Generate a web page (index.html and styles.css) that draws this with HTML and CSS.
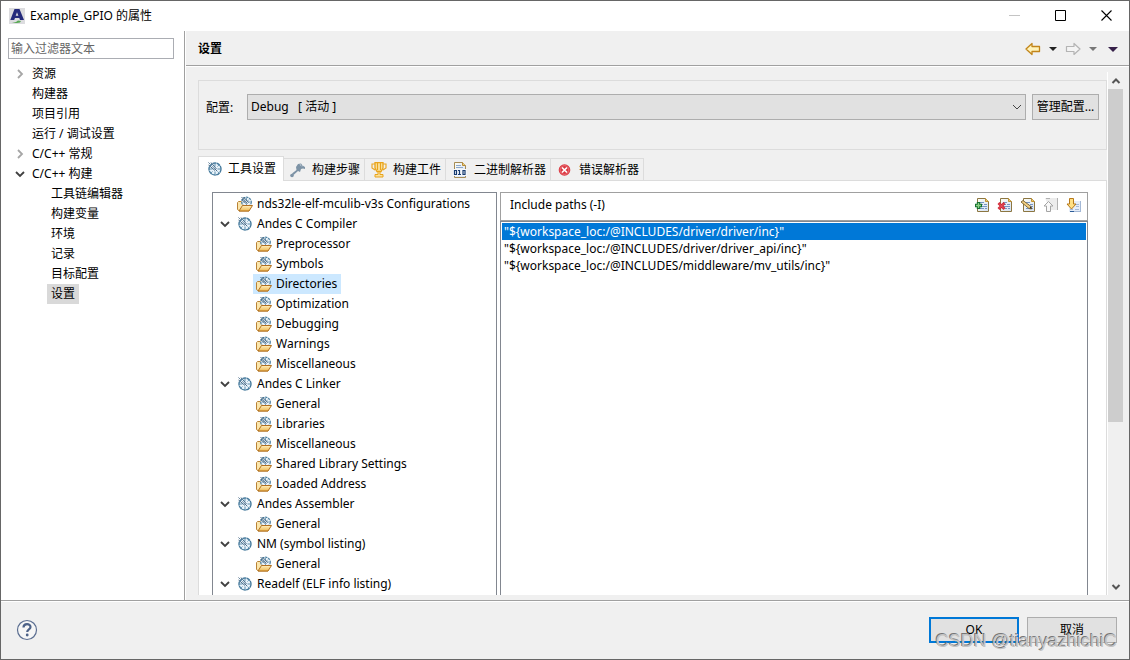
FILE: index.html
```html
<!DOCTYPE html>
<html lang="zh-CN">
<head>
<meta charset="utf-8">
<title>Example_GPIO 的属性</title>
<link rel="stylesheet" href="styles.css">
</head>
<body>
<svg class="sprite" aria-hidden="true">
  <defs>
    <linearGradient id="gold" x1="0" y1="0" x2="0" y2="1"><stop offset="0" stop-color="#fff0c0"/><stop offset="1" stop-color="#eeb850"/></linearGradient>
    <linearGradient id="page" x1="0" y1="0" x2="1" y2="1"><stop offset="0" stop-color="#fffef4"/><stop offset="1" stop-color="#d3e0f4"/></linearGradient>
  </defs>
  <symbol id="down" viewBox="0 0 10 10"><path d="M1 3l4 4 4-4" fill="none" stroke="#404040" stroke-width="1.8"/></symbol>
  <symbol id="right" viewBox="0 0 10 10"><path d="M3 1l4 4-4 4" fill="none" stroke="#a6a6a6" stroke-width="1.8"/></symbol>
  <symbol id="gauge" viewBox="0 0 16 16">
    <circle cx="8" cy="8" r="6" fill="#e9f3fa" stroke="#44799c" stroke-width="1.400" stroke-dasharray="3.8 .4"/>
    <path d="M8 2.500v3M13.500 8h-3M8 13.500v-3M2.500 8h3M11.800 4.200l-1.300 1.300M11.800 11.800l-1.300-1.300M4.200 11.800l1.300-1.300" stroke="#4f83a4" stroke-width=".9"/>
    <path d="M1.500 1.500l8.500 8.500M4 1.500l5.500 6.500M1.500 4l6.500 5.500" stroke="#3b5f7e" stroke-width=".9"/>
    <path d="M2.500 2.500l5 5" stroke="#a9c3d5" stroke-width=".6"/>
  </symbol>
  <symbol id="folder" viewBox="0 0 16 16">
    <path d="M.5 6.500l1-1h3l1 1.500v1.500H12v6.500H2.500l-2-1.500z" fill="#fbe6ac" stroke="#b98236"/>
    <circle cx="9.500" cy="6" r="4.800" fill="#edf5fa" stroke="#4b80a2" stroke-width="1.200" stroke-dasharray="2.300 .8"/>
    <path d="M9.500 2v2.500M9.500 10V8M13.500 6H11M5.500 6H8M12 3.500l-1.500 1.500" stroke="#5c8ba9" stroke-width=".8"/>
    <path d="M4.500 1l6 6.500M6.500 1l5 5.500M4.500 3l5 5" stroke="#264a6a" stroke-width=".8"/>
    <path d="M2 15l3.500-5.500h10L12 15z" fill="url(#gold)" stroke="#b2701f"/>
  </symbol>
  <symbol id="doc" viewBox="0 0 16 16">
    <path d="M3.500 1.500h8l3 3v10h-11z" fill="url(#page)" stroke="#8c7641"/>
    <path d="M11.500 1.500v3h3" fill="#ebca72" stroke="#c4922f"/>
    <path d="M6 5.500h4M6 7.500h3m1 0h3M6 9.500h7M6 11.500h4m1 0h2" stroke="#7695c3"/>
  </symbol>
</svg>

<div class="window">
  <header class="titlebar">
    <svg class="app-icon" viewBox="0 0 16 16"><path d="M0 0h16v16H0z" fill="#dcdcdf"/><path d="M5.500 1h5L15 12h-4l-.7-2H6l-.8 2H1.300zM8 4.200L6.700 7.800h2.700z" fill="#252b7c" fill-rule="evenodd"/><path d="M3 15l4-1 2-1.500 3 .5-1 1.500-3 .500z" fill="#58a854"/></svg>
    <h1 class="title">Example_GPIO 的属性</h1>
    <div class="window-controls">
      <button class="window-button" aria-label="最小化"><svg viewBox="0 0 11 11"><path d="M0 5.500h11" stroke="#c4c4c4"/></svg></button>
      <button class="window-button" aria-label="最大化"><svg viewBox="0 0 11 11"><path d="M.5.5h10v10H.5z" fill="none" stroke="#000"/></svg></button>
      <button class="window-button" aria-label="关闭"><svg viewBox="0 0 11 11"><path d="M.5.5l10 10M10.500.5l-10 10" fill="none" stroke="#000" stroke-width="1.100"/></svg></button>
    </div>
  </header>

  <div class="workspace">
    <nav class="sidebar" aria-label="属性页">
      <input class="filter" type="text" placeholder="输入过滤器文本" aria-label="输入过滤器文本">
      <ul class="nav-tree">
        <li class="nav-row"><button class="toggle" aria-label="展开"><svg><use href="#right"/></svg></button><a class="nav-link" href="#resource">资源</a></li>
        <li class="nav-row"><span class="toggle"></span><a class="nav-link" href="#builder">构建器</a></li>
        <li class="nav-row"><span class="toggle"></span><a class="nav-link" href="#refs">项目引用</a></li>
        <li class="nav-row"><span class="toggle"></span><a class="nav-link" href="#run">运行 / 调试设置</a></li>
        <li class="nav-row"><button class="toggle" aria-label="展开"><svg><use href="#right"/></svg></button><a class="nav-link" href="#general">C/C++ 常规</a></li>
        <li>
          <div class="nav-row"><button class="toggle" aria-label="折叠"><svg><use href="#down"/></svg></button><a class="nav-link" href="#build">C/C++ 构建</a></div>
          <ul class="nav-children">
            <li class="nav-row"><a class="nav-link" href="#chain">工具链编辑器</a></li>
            <li class="nav-row"><a class="nav-link" href="#vars">构建变量</a></li>
            <li class="nav-row"><a class="nav-link" href="#env">环境</a></li>
            <li class="nav-row"><a class="nav-link" href="#log">记录</a></li>
            <li class="nav-row"><a class="nav-link" href="#target">目标配置</a></li>
            <li class="nav-row"><a class="nav-link current" href="#settings" aria-current="page">设置</a></li>
          </ul>
        </li>
      </ul>
    </nav>

    <main class="main">
      <div class="page-head">
        <h2 class="page-title">设置</h2>
        <div class="history">
          <button class="history-arrow" aria-label="后退"><svg viewBox="0 0 16 14"><path d="M1 7l6-5.500v3h7.500v5H7v3z" fill="#fff3b9" stroke="#c2851a" stroke-width="1.300" stroke-linejoin="round"/></svg></button>
          <button class="caret" aria-label="后退历史"><svg viewBox="0 0 8 4"><path d="M0 0h8L4 4z" fill="#222"/></svg></button>
          <button class="history-arrow" aria-label="前进"><svg viewBox="0 0 16 14"><path d="M15 7L9 1.500v3H1.500v5H9v3z" fill="#f4f4f4" stroke="#b4b4b4" stroke-width="1.200" stroke-linejoin="round"/></svg></button>
          <button class="caret" aria-label="前进历史"><svg viewBox="0 0 8 4"><path d="M0 0h8L4 4z" fill="#777"/></svg></button>
          <button class="menu-caret" aria-label="菜单"><svg viewBox="0 0 10 5"><path d="M0 0h10L5 5z" fill="#362049"/></svg></button>
        </div>
      </div>

      <div class="scroller">
        <div class="content">
          <section class="config">
            <label class="config-label" for="config">配置:</label>
            <span class="select-wrap">
              <select class="config-select" id="config"><option>Debug&nbsp;&nbsp; [ 活动 ]</option></select>
              <svg class="select-arrow" viewBox="0 0 10 10"><path d="M1 3l4 4 4-4" fill="none" stroke="#444"/></svg>
            </span>
            <button class="button manage">管理配置...</button>
          </section>

          <div class="tabs" role="tablist">
            <button class="tab active" role="tab" aria-selected="true"><svg class="icon"><use href="#gauge"/></svg>工具设置</button>
            <button class="tab" role="tab"><svg class="icon" viewBox="0 0 16 16"><path d="M6 5l2-3 3-.5 1.500 2L15 5v2l-2-.5-2 .5-1 3-2-1-4.500 4-1.500-1.500L6.500 8z" fill="#7d93a6"/><circle cx="2" cy="13.500" r="1.800" fill="#7d93a6"/><path d="M10 2l1 2M13 3l-1 1.500" stroke="#d4dde4" stroke-width=".7"/></svg>构建步骤</button>
            <button class="tab" role="tab"><svg class="icon" viewBox="0 0 16 16"><path d="M4 .7h8V6l-2 3.500H6L4 6z" fill="#fae09a" stroke="#e9a41c" stroke-width="1.300"/><path d="M4 2H1v4l3 2M12 2h3v4l-3 2M6.500 1v7M9.500 1v7" fill="none" stroke="#e9a41c" stroke-width="1.100"/><path d="M7 9.500h2v3h3v2.500H4v-2.500h3z" fill="#fae09a" stroke="#e9a41c"/></svg>构建工件</button>
            <button class="tab" role="tab"><svg class="icon" viewBox="0 0 16 16"><path d="M2.500.5h8l3 3v12h-11z" fill="url(#page)" stroke="#a58b55"/><path d="M10.500.5v3h3" fill="#eed17e" stroke="#b88a35"/><path d="M4 3.500h5M4 5.500h7" stroke="#8ba8ce"/><path d="M1 7h14v7H1z" fill="#f4f7fc"/><path d="M2.500 8.500h2v4h-2zM6 8.500h2M7.500 8v5M6 12.500h3M11 8.500h2v4h-2z" fill="none" stroke="#173b70" stroke-width="1.200"/></svg>二进制解析器</button>
            <button class="tab" role="tab"><svg class="icon" viewBox="0 0 16 16"><circle cx="7.500" cy="8" r="5.800" fill="#da3842"/><circle cx="7.500" cy="8" r="4.400" fill="none" stroke="#f0878a" stroke-width=".7"/><path d="M5 5.500l5 5M10 5.500l-5 5" stroke="#fff" stroke-width="1.700"/></svg>错误解析器</button>
          </div>

          <section class="panel" role="tabpanel">
            <ul class="tool-tree">
              <li class="tool-row"><span class="toggle"></span><button class="node"><svg class="icon"><use href="#folder"/></svg>nds32le-elf-mculib-v3s Configurations</button></li>
              <li>
                <div class="tool-row"><button class="toggle" aria-label="折叠"><svg><use href="#down"/></svg></button><button class="node"><svg class="icon"><use href="#gauge"/></svg>Andes C Compiler</button></div>
                <ul class="tool-children">
                  <li class="tool-row"><button class="node"><svg class="icon"><use href="#folder"/></svg>Preprocessor</button></li>
                  <li class="tool-row"><button class="node"><svg class="icon"><use href="#folder"/></svg>Symbols</button></li>
                  <li class="tool-row"><button class="node selected"><svg class="icon"><use href="#folder"/></svg>Directories</button></li>
                  <li class="tool-row"><button class="node"><svg class="icon"><use href="#folder"/></svg>Optimization</button></li>
                  <li class="tool-row"><button class="node"><svg class="icon"><use href="#folder"/></svg>Debugging</button></li>
                  <li class="tool-row"><button class="node"><svg class="icon"><use href="#folder"/></svg>Warnings</button></li>
                  <li class="tool-row"><button class="node"><svg class="icon"><use href="#folder"/></svg>Miscellaneous</button></li>
                </ul>
              </li>
              <li>
                <div class="tool-row"><button class="toggle" aria-label="折叠"><svg><use href="#down"/></svg></button><button class="node"><svg class="icon"><use href="#gauge"/></svg>Andes C Linker</button></div>
                <ul class="tool-children">
                  <li class="tool-row"><button class="node"><svg class="icon"><use href="#folder"/></svg>General</button></li>
                  <li class="tool-row"><button class="node"><svg class="icon"><use href="#folder"/></svg>Libraries</button></li>
                  <li class="tool-row"><button class="node"><svg class="icon"><use href="#folder"/></svg>Miscellaneous</button></li>
                  <li class="tool-row"><button class="node"><svg class="icon"><use href="#folder"/></svg>Shared Library Settings</button></li>
                  <li class="tool-row"><button class="node"><svg class="icon"><use href="#folder"/></svg>Loaded Address</button></li>
                </ul>
              </li>
              <li>
                <div class="tool-row"><button class="toggle" aria-label="折叠"><svg><use href="#down"/></svg></button><button class="node"><svg class="icon"><use href="#gauge"/></svg>Andes Assembler</button></div>
                <ul class="tool-children">
                  <li class="tool-row"><button class="node"><svg class="icon"><use href="#folder"/></svg>General</button></li>
                </ul>
              </li>
              <li>
                <div class="tool-row"><button class="toggle" aria-label="折叠"><svg><use href="#down"/></svg></button><button class="node"><svg class="icon"><use href="#gauge"/></svg>NM (symbol listing)</button></div>
                <ul class="tool-children">
                  <li class="tool-row"><button class="node"><svg class="icon"><use href="#folder"/></svg>General</button></li>
                </ul>
              </li>
              <li>
                <div class="tool-row"><button class="toggle" aria-label="折叠"><svg><use href="#down"/></svg></button><button class="node"><svg class="icon"><use href="#gauge"/></svg>Readelf (ELF info listing)</button></div>
              </li>
            </ul>

            <div class="paths">
              <div class="paths-head">
                <h3 class="paths-title" id="paths-title">Include paths (-I)</h3>
                <div class="paths-tools">
                  <button class="tool" aria-label="添加"><svg viewBox="0 0 16 16"><use href="#doc"/><path d="M4.500 5v7M1 8.500h7" stroke="#146f2f" stroke-width="3.400"/><path d="M4.500 6v5M2 8.500h5" stroke="#8ed285" stroke-width="1.300"/></svg></button>
                  <button class="tool" aria-label="删除"><svg viewBox="0 0 16 16"><use href="#doc"/><path d="M1.500 6l6 6M7.500 6l-6 6" stroke="#cf2835" stroke-width="2.800"/><path d="M2 6.500l5 5M7 6.500l-5 5" stroke="#ef6570" stroke-width=".8"/></svg></button>
                  <button class="tool" aria-label="编辑"><svg viewBox="0 0 16 16"><use href="#doc"/><path d="M1 5l2-1.500 8 6 .5 2.500-2.500-.5z" fill="#f2cf82" stroke="#76602f" stroke-width=".9"/><path d="M9.500 11l2 1-.5-2.500z" fill="#222"/></svg></button>
                  <button class="tool" aria-label="上移"><svg viewBox="0 0 16 16"><path d="M2 1h12v12H7z" fill="#ececec"/><path d="M14.500 1v12M3 1.500h4" stroke="#b1b1b1"/><path d="M5.500 4.500L10 9H7.500v5.500h-4V9H1z" fill="#f8f8f8" stroke="#a4a4a4"/></svg></button>
                  <button class="tool" aria-label="下移"><svg viewBox="0 0 16 16"><path d="M3 4h11v11H3z" fill="#e5edf8"/><path d="M14.500 4v11M9 7.500h4M10 9.500h3M4 12.500h3m2 0h4M8 14.500h6" stroke="#a3b8d6"/><path d="M4 14.500h4" stroke="#2c5c98"/><path d="M3.500 1.500h4V7H10l-4.500 5L1 7h2.500z" fill="#ffe084" stroke="#b7791a"/></svg></button>
                </div>
              </div>
              <ul class="path-list" role="listbox" aria-labelledby="paths-title">
                <li class="path chosen" role="option" aria-selected="true">"${workspace_loc:/@INCLUDES/driver/driver/inc}"</li>
                <li class="path" role="option">"${workspace_loc:/@INCLUDES/driver/driver_api/inc}"</li>
                <li class="path" role="option">"${workspace_loc:/@INCLUDES/middleware/mv_utils/inc}"</li>
              </ul>
            </div>
          </section>
        </div>
        <div class="scrollbar">
          <button class="scroll-button" aria-label="向上滚动"><svg viewBox="0 0 10 10"><path d="M1.500 7L5 3.500 8.500 7" fill="none" stroke="#555" stroke-width="2"/></svg></button>
          <div class="scroll-track"><div class="scroll-thumb"></div></div>
          <button class="scroll-button" aria-label="向下滚动"><svg viewBox="0 0 10 10"><path d="M1.500 3L5 6.500 8.500 3" fill="none" stroke="#555" stroke-width="2"/></svg></button>
        </div>
      </div>
    </main>
  </div>

  <footer class="footer">
    <button class="help" aria-label="帮助"><svg viewBox="0 0 22 22"><circle cx="11" cy="11" r="9.500" fill="#f6f6f6" stroke="#5b6e91" stroke-width="1.200"/><path d="M7.500 8.500c0-4.500 7-4.500 7-.5 0 2.500-3.300 2.300-3.300 5" fill="none" stroke="#4d6288" stroke-width="2.200"/><circle cx="11.200" cy="16" r="1.400" fill="#4d6288"/></svg></button>
    <div class="actions">
      <button class="button action primary">OK</button>
      <button class="button action">取消</button>
      <span class="watermark">CSDN @tianyazhichiC</span>
    </div>
  </footer>
</div>
</body>
</html>
```
FILE: styles.css
```css
* { box-sizing: border-box; }
html, body { height: 100%; }
body {
  margin: 0;
  font: 12px/20px "Noto Sans", "Noto Sans CJK SC", sans-serif;
  color: #000;
  background: #f0f0f0;
}
button, input, select { font: inherit; color: inherit; }
button { padding: 0; border: 0; background: none; }
ul { list-style: none; margin: 0; padding: 0; }
h1, h2, h3 { margin: 0; font: inherit; }
svg { display: block; flex: none; }
.sprite { position: absolute; width: 0; height: 0; }
.icon { width: 16px; height: 16px; }

.window { display: flex; flex-direction: column; height: 100vh; border: 1px solid #666; overflow: hidden; }

.titlebar { display: flex; align-items: center; height: 30px; padding-left: 8px; background: #fff; }
.app-icon { width: 16px; height: 16px; }
.title { flex: 1; padding-left: 5px; }
.window-controls { display: flex; }
.window-button { display: flex; align-items: center; justify-content: center; width: 46px; height: 30px; padding-bottom: 2px; }
.window-button svg { width: 11px; height: 11px; }

.workspace { display: flex; flex: 1; min-height: 0; }
.sidebar { flex: none; width: 184px; padding: 7px 10px 0 7px; background: #fff; border-right: 1px solid #a0a0a0; }
.filter { display: block; width: 100%; height: 21px; padding: 0 2px; border: 1px solid #abadb3; background: #fff; }
.filter::placeholder { color: #666; opacity: 1; }
.nav-tree { padding-top: 5px; }
.nav-row { display: flex; height: 20px; }
.nav-link { padding: 0 4px; color: inherit; text-decoration: none; }
.nav-children { padding-left: 39px; }
.current { background: #d9d9d9; }
.toggle { display: flex; flex: none; align-items: center; justify-content: center; width: 19px; height: 20px; }
.toggle svg { width: 10px; height: 10px; }
.nav-row .toggle { width: 20px; padding-left: 3px; }

.main { display: flex; flex: 1; flex-direction: column; min-width: 0; border-left: 1px solid #fff; }
.page-head { display: flex; flex: none; align-items: center; justify-content: space-between; height: 35px; padding: 2px 11px 0 12px; border-bottom: 1px solid #a0a0a0; box-shadow: 0 1px #fff; }
.page-title { font-weight: 700; }
.history { display: flex; align-items: center; gap: 8px; }
.history-arrow svg { width: 16px; height: 14px; }
.caret svg { width: 8px; height: 4px; }
.menu-caret { padding-left: 3px; }
.menu-caret svg { width: 10px; height: 5px; }

.scroller { display: flex; flex: 1; min-height: 0; margin: 6px 6px 5px 12px; }
.content { display: flex; flex: 1; flex-direction: column; min-width: 0; padding-top: 8px; border-right: 1px solid #fff; }
.config { display: flex; flex: none; height: 70px; padding: 13px 7px 0; border: 1px solid #dcdcdc; }
.config-label { flex: none; width: 41px; line-height: 28px; }
.select-wrap { position: relative; flex: 1; height: 26px; }
.config-select { width: 100%; height: 26px; padding: 0 3px; border: 1px solid #adadad; border-radius: 0; background: #e1e1e1; appearance: none; }
.select-arrow { position: absolute; top: 8px; right: 4px; width: 10px; height: 10px; pointer-events: none; }
.button { border: 1px solid #adadad; background: #e1e1e1; white-space: nowrap; }
.manage { width: 67px; height: 26px; margin-left: 6px; }

.tabs { display: flex; flex: none; align-items: flex-end; height: 31px; padding-top: 6px; border-bottom: 1px solid #dcdcdc; }
.tab { display: flex; align-items: center; gap: 6px; height: 22px; padding: 0 4px 0 6px; border: 1px solid #dcdcdc; border-width: 1px 1px 0 0; white-space: nowrap; }
.tab.active { gap: 5px; height: 25px; margin-bottom: -1px; padding: 0 7px 0 8px; border-left-width: 1px; background: #fff; }

.panel { display: flex; flex: 1; gap: 3px; min-height: 0; padding: 11px 18px 0 13px; border: 1px solid #dcdcdc; border-width: 0 1px; background: #fff; }
.tool-tree { flex: none; width: 285px; padding: 1px 2px 0; overflow: hidden; border: 1px solid #828790; border-bottom: 0; }
.tool-row { display: flex; height: 20px; }
.tool-children { padding-left: 38px; }
.node { display: flex; align-items: center; gap: 4px; height: 20px; padding: 0 4px 0 3px; white-space: nowrap; }
.selected { background: #cce8ff; }

.paths { display: flex; flex: 1; flex-direction: column; min-width: 0; }
.paths-head { display: flex; flex: none; align-items: center; justify-content: space-between; height: 29px; padding: 0 5px 3px 9px; border: 1px solid #a0a0a0; }
.paths-tools { display: flex; gap: 7px; }
.tool svg { width: 16px; height: 16px; }
.path-list { flex: 1; padding: 1px; border: 1px solid #828790; border-bottom: 0; overflow: hidden; }
.path { height: 17px; padding: 0 2px; line-height: 17px; white-space: nowrap; }
.chosen { background: #0078d7; color: #fff; }

.scrollbar { display: flex; flex: none; flex-direction: column; width: 15px; background: #f0f0f0; }
.scroll-button { display: flex; align-items: center; justify-content: center; height: 17px; }
.scroll-button svg { width: 10px; height: 10px; }
.scroll-track { flex: 1; }
.scroll-thumb { height: 68%; background: #cdcdcd; }

.footer { display: flex; flex: none; align-items: center; justify-content: space-between; height: 59px; padding: 0 12px 0 15px; border-top: 1px solid #a0a0a0; box-shadow: inset 0 1px #fff; }
.help svg { width: 22px; height: 22px; }
.actions { position: relative; display: flex; gap: 8px; }
.action { width: 90px; height: 26px; }
.primary { border: 2px solid #0078d7; }
.watermark { position: absolute; top: 13px; right: 0; font: 18px/22px "Liberation Sans", sans-serif; color: #c4c4c4; text-shadow: -1px -1px #777; white-space: nowrap; }
```
